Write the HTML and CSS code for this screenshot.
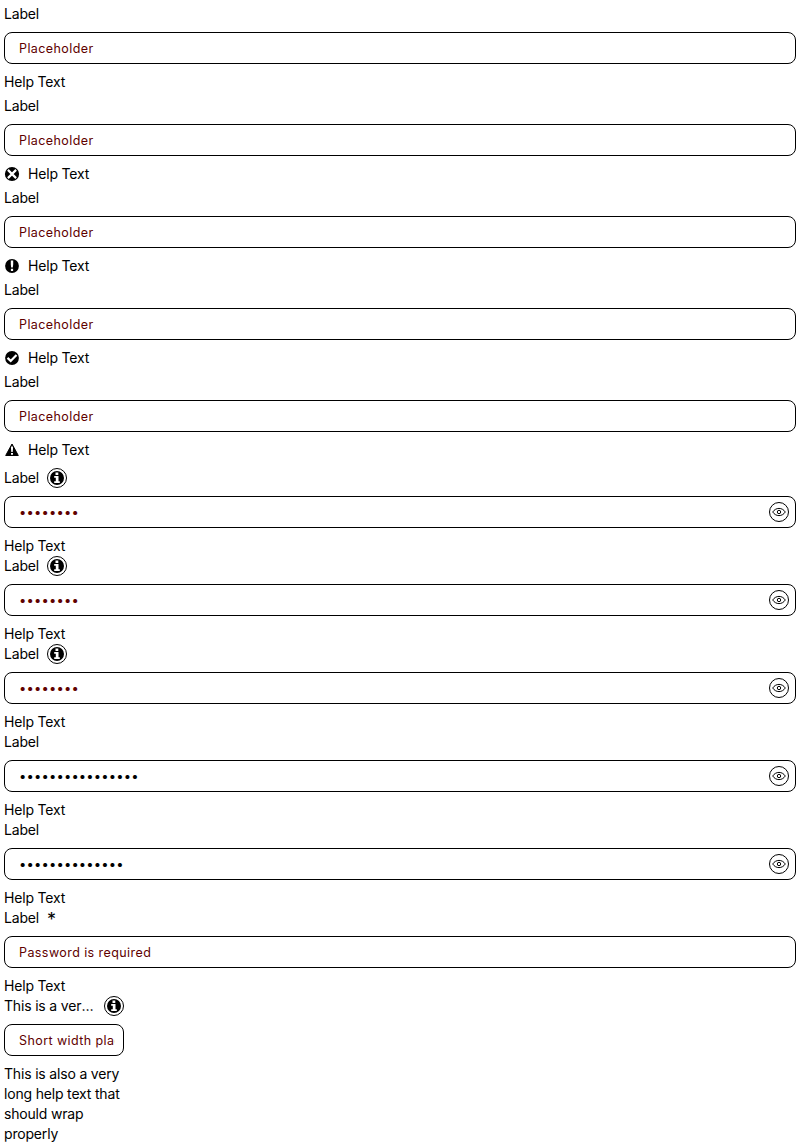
FILE: index.html
```
<!DOCTYPE html>
<html lang="en">
<head>
<meta charset="utf-8">
<title>Password inputs</title>
<link rel="stylesheet" href="styles.css">
</head>
<body>
<svg class="defs" aria-hidden="true">
  <symbol id="info" viewBox="0 0 16 16"><circle cx="8" cy="8" r="7"/><path fill="#fff" d="M6.500 2.500h2.800v2.500H6.500zM5.200 6h4.300v5.200h1.300v1.700H5.200v-1.700h1.600V7.700H5.200z"/></symbol>
  <symbol id="invalid" viewBox="0 0 16 16"><circle cx="8" cy="8" r="7.100"/><path fill="none" stroke="#fff" stroke-width="2.200" d="M3.900 3.900l8.200 8.200M12.100 3.900l-8.200 8.200"/></symbol>
  <symbol id="alert" viewBox="0 0 16 16"><circle cx="8" cy="8" r="6.900"/><path fill="#fff" d="M6.800 2.500h2.400v4L8.800 9.500H7.200L6.800 6.500zM6.900 10.800h2.200V13H6.900z"/></symbol>
  <symbol id="valid" viewBox="0 0 16 16"><circle cx="8" cy="8" r="6.900"/><path fill="none" stroke="#fff" stroke-width="2.200" d="M3.500 7.900l3.200 3 5.800-5.900"/></symbol>
  <symbol id="warning" viewBox="0 0 16 16"><path stroke="#000" stroke-linejoin="round" d="M8 2l6.300 11.500H1.700z"/><path fill="#fff" d="M7 4.500h2v2.500l-.3 3H7.300L7 7zM7 11h2v1.800H7z"/></symbol>
  <symbol id="eye" viewBox="0 0 16 16"><path fill="none" stroke="#000" d="M1.700 8C4.800 3.200 11.200 3.200 14.300 8 11.200 12.800 4.800 12.800 1.700 8z"/><circle cx="8" cy="8" r="1.700" fill="none" stroke="#000"/></symbol>
</svg>
<main class="stack">
  <section class="stack-spaced">
    <div class="field"><label class="label">Label</label><div class="box"><input class="input input-text" type="password" placeholder="Placeholder"></div><div class="help">Help Text</div></div>
    <div class="field"><label class="label">Label</label><div class="box"><input class="input input-text" type="password" placeholder="Placeholder"></div><div class="help"><svg class="icon"><use href="#invalid"/></svg>Help Text</div></div>
    <div class="field"><label class="label">Label</label><div class="box"><input class="input input-text" type="password" placeholder="Placeholder"></div><div class="help"><svg class="icon"><use href="#alert"/></svg>Help Text</div></div>
    <div class="field"><label class="label">Label</label><div class="box"><input class="input input-text" type="password" placeholder="Placeholder"></div><div class="help"><svg class="icon"><use href="#valid"/></svg>Help Text</div></div>
    <div class="field"><label class="label">Label</label><div class="box"><input class="input input-text" type="password" placeholder="Placeholder"></div><div class="help"><svg class="icon"><use href="#warning"/></svg>Help Text</div></div>
  </section>
  <section>
    <div class="field"><div class="label"><span class="label-text">Label</span><button class="round"><svg class="icon"><use href="#info"/></svg></button></div><div class="box"><input class="input" type="password" placeholder="••••••••"><button class="round"><svg class="icon"><use href="#eye"/></svg></button></div><div class="help">Help Text</div></div>
    <div class="field"><div class="label"><span class="label-text">Label</span><button class="round"><svg class="icon"><use href="#info"/></svg></button></div><div class="box"><input class="input" type="password" placeholder="••••••••"><button class="round"><svg class="icon"><use href="#eye"/></svg></button></div><div class="help">Help Text</div></div>
    <div class="field"><div class="label"><span class="label-text">Label</span><button class="round"><svg class="icon"><use href="#info"/></svg></button></div><div class="box"><input class="input" type="password" placeholder="••••••••"><button class="round"><svg class="icon"><use href="#eye"/></svg></button></div><div class="help">Help Text</div></div>
    <div class="field"><label class="label">Label</label><div class="box"><input class="input" type="password" value="averylongpasswrd"><button class="round"><svg class="icon"><use href="#eye"/></svg></button></div><div class="help">Help Text</div></div>
    <div class="field"><label class="label">Label</label><div class="box"><input class="input" type="password" value="secretpassword"><button class="round"><svg class="icon"><use href="#eye"/></svg></button></div><div class="help">Help Text</div></div>
    <div class="field"><label class="label">Label<span class="required">*</span></label><div class="box"><input class="input input-text" type="password" placeholder="Password is required"></div><div class="help">Help Text</div></div>
    <div class="field field-short"><div class="label"><span class="label-text">This is a very long label</span><button class="round"><svg class="icon"><use href="#info"/></svg></button></div><div class="box box-short"><input class="input input-text" type="password" placeholder="Short width placeholder"></div><div class="help">This is also a very long help text that should wrap properly</div></div>
  </section>
</main>
</body>
</html>
```
FILE: styles.css
```
* { box-sizing: border-box; }
body { margin: 0; padding: 4px; background: #fff; color: #000; font: 370 14px/20px Inter, sans-serif; letter-spacing: -0.18px; }
.defs { display: none; }
.stack { display: flex; flex-direction: column; gap: 8px; }
.stack-spaced { display: flex; flex-direction: column; gap: 4px; }
.field { display: flex; flex-direction: column; gap: 8px; }
.field-short { width: 120px; }
.label { display: flex; align-items: center; gap: 8px; height: 20px; }
.label-text { min-width: 0; overflow: hidden; white-space: nowrap; text-overflow: ellipsis; }
.field-short .label { justify-content: space-between; }
.required { padding-top: 3px; font-size: 18px; }
.box { display: flex; align-items: center; height: 32px; padding: 0 6px 0 14px; border: 1px solid #000; border-radius: 8px; }
.box-short { padding-right: 8px; }
.input { flex: 1; min-width: 0; height: 30px; padding: 0; border: 0; outline: 0; background: transparent; color: #000; font: 13px/20px Inter, sans-serif; letter-spacing: 0.17px; }
.input-text { font-size: 12.5px; letter-spacing: 0.42px; }
.input::placeholder { color: #600000; opacity: 1; }
.help { display: flex; gap: 8px; align-items: center; }
.icon { display: block; flex: none; width: 16px; height: 16px; }
.round { display: flex; flex: none; align-items: center; justify-content: center; width: 20px; height: 20px; padding: 0; border: 1px solid #000; border-radius: 50%; background: #fff; color: #000; }
```
